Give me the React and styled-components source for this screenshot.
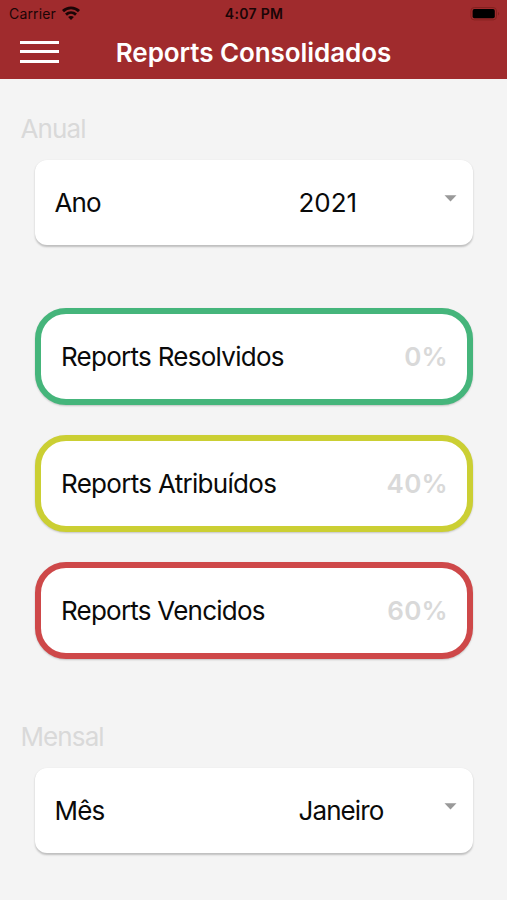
import React from "react";
import styled, { createGlobalStyle } from "styled-components";

const GlobalStyle = createGlobalStyle`
  * { box-sizing: border-box; }
  body {
    margin: 0;
    background: #f4f4f4;
    font-family: Inter, "Liberation Sans", sans-serif;
    color: #0a0a0a;
  }
`;

const Screen = styled.div`
  width: 507px;
  height: 900px;
  overflow: hidden;
  background: #f4f4f4;
`;

const Header = styled.header`
  height: 79px;
  background: #a02b2d;
`;

const StatusBar = styled.div`
  display: grid;
  grid-template-columns: 1fr auto 1fr;
  align-items: center;
  height: 27px;
  padding: 0 7px 0 9px;
  font-size: 14px;
  line-height: 27px;
  color: #1a0506;
`;

const Carrier = styled.div`
  display: flex;
  align-items: center;
  gap: 6px;
  letter-spacing: 0.15px;

  svg {
    margin-bottom: 2px;
  }
`;

const Clock = styled.div`
  margin-right: 1px;
  font-weight: 600;
  letter-spacing: 0.3px;
`;

const BatterySlot = styled.div`
  display: flex;
  justify-content: flex-end;
`;

const NavBar = styled.div`
  display: grid;
  grid-template-columns: 40px 1fr 40px;
  align-items: center;
  height: 50px;
  padding: 0 20px;
`;

const MenuButton = styled.button`
  display: flex;
  flex-direction: column;
  gap: 6.5px;
  width: 39px;
  margin: 0 0 1px;
  padding: 0;
  border: 0;
  background: none;
`;

const MenuBar = styled.span`
  height: 3px;
  background: #fff;
`;

const Title = styled.h1`
  margin: 1px 0 0;
  text-align: center;
  white-space: nowrap;
  font-size: 26px;
  line-height: 32px;
  font-weight: 600;
  letter-spacing: -0.07px;
  color: #fff;
`;

const Section = styled.section`
  padding: ${(p) => p.$top}px 34px 0 35px;
`;

const SectionTitle = styled.h2`
  margin: 0 0 15px -14.5px;
  font-size: 26px;
  line-height: 32px;
  font-weight: 400;
  letter-spacing: -0.9px;
  color: #d9d9d9;
`;

const SelectCard = styled.div`
  display: grid;
  grid-template-columns: 244px 1fr 13px;
  align-items: center;
  height: 85px;
  padding: 0 16px 0 19.5px;
  border-radius: 12px;
  background: #fff;
  box-shadow: 0 1.5px 2px rgba(0, 0, 0, 0.22);
  font-size: 26px;
  line-height: 32px;
`;

const Label = styled.span`
  white-space: nowrap;
  letter-spacing: ${(p) => p.$tracking}px;
`;

const Caret = styled.svg`
  width: 13px;
  height: 7px;
  margin-top: -9px;
`;

const ReportList = styled.div`
  display: flex;
  flex-direction: column;
  gap: 30px;
  padding: 63px 34px 0 35px;
`;

const ReportCard = styled.div`
  display: flex;
  align-items: center;
  justify-content: space-between;
  height: 97px;
  padding: 1px 19px 0 20px;
  border: 6px solid ${(p) => p.$color};
  border-radius: 31px;
  background: #fff;
  box-shadow: 0 1px 2px rgba(0, 0, 0, 0.2);
  font-size: 26px;
  line-height: 32px;
`;

const Percent = styled.span`
  font-weight: 600;
  letter-spacing: 0.3px;
  color: #d9d9d9;
`;

const reports = [
  { label: "Reports Resolvidos", value: "0%", color: "#45b57b", tracking: -0.73 },
  { label: "Reports Atribuídos", value: "40%", color: "#cbcf33", tracking: -0.7 },
  { label: "Reports Vencidos", value: "60%", color: "#ce4849", tracking: -0.77 },
];

function WifiIcon() {
  return (
    <svg width="18" height="14" viewBox="0 0 18 14" fill="none" stroke="currentColor" strokeWidth="2.9">
      <path d="M1 5.1C5.5.8 12.5.8 17 5.1" />
      <path d="M4 8.6c2.9-2.6 7.1-2.6 10 0" />
      <path d="M9 13.9 6.1 11c1.7-1.5 4.1-1.5 5.8 0Z" fill="currentColor" stroke="none" />
    </svg>
  );
}

function BatteryIcon() {
  return (
    <svg width="30" height="14" viewBox="0 0 30 14">
      <rect x="0.9" y="0.5" width="25.6" height="12.4" rx="3.4" fill="none" stroke="#84211f" />
      <rect x="2.6" y="2.1" width="22.2" height="9.2" rx="1.8" fill="#000" />
      <path d="M28 5v3.6c1.6-.6 1.6-3 0-3.6Z" fill="#84211f" />
    </svg>
  );
}

function SelectField({ label, value, valueTracking }) {
  return (
    <SelectCard>
      <Label $tracking={-0.85}>{label}</Label>
      <Label $tracking={valueTracking}>{value}</Label>
      <Caret viewBox="0 0 13 7">
        <path d="M.5.3h12l-6 6.2Z" fill="#999" />
      </Caret>
    </SelectCard>
  );
}

export default function App() {
  return (
    <Screen>
      <GlobalStyle />
      <Header>
        <StatusBar>
          <Carrier>
            Carrier
            <WifiIcon />
          </Carrier>
          <Clock>4:07 PM</Clock>
          <BatterySlot>
            <BatteryIcon />
          </BatterySlot>
        </StatusBar>
        <NavBar>
          <MenuButton aria-label="Menu">
            <MenuBar />
            <MenuBar />
            <MenuBar />
          </MenuButton>
          <Title>Reports Consolidados</Title>
        </NavBar>
      </Header>
      <Section $top={34}>
        <SectionTitle>Anual</SectionTitle>
        <SelectField label="Ano" value="2021" valueTracking={0} />
      </Section>
      <ReportList>
        {reports.map((r) => (
          <ReportCard key={r.label} $color={r.color}>
            <Label $tracking={r.tracking}>{r.label}</Label>
            <Percent>{r.value}</Percent>
          </ReportCard>
        ))}
      </ReportList>
      <Section $top={62}>
        <SectionTitle>Mensal</SectionTitle>
        <SelectField label="Mês" value="Janeiro" valueTracking={-0.9} />
      </Section>
    </Screen>
  );
}
